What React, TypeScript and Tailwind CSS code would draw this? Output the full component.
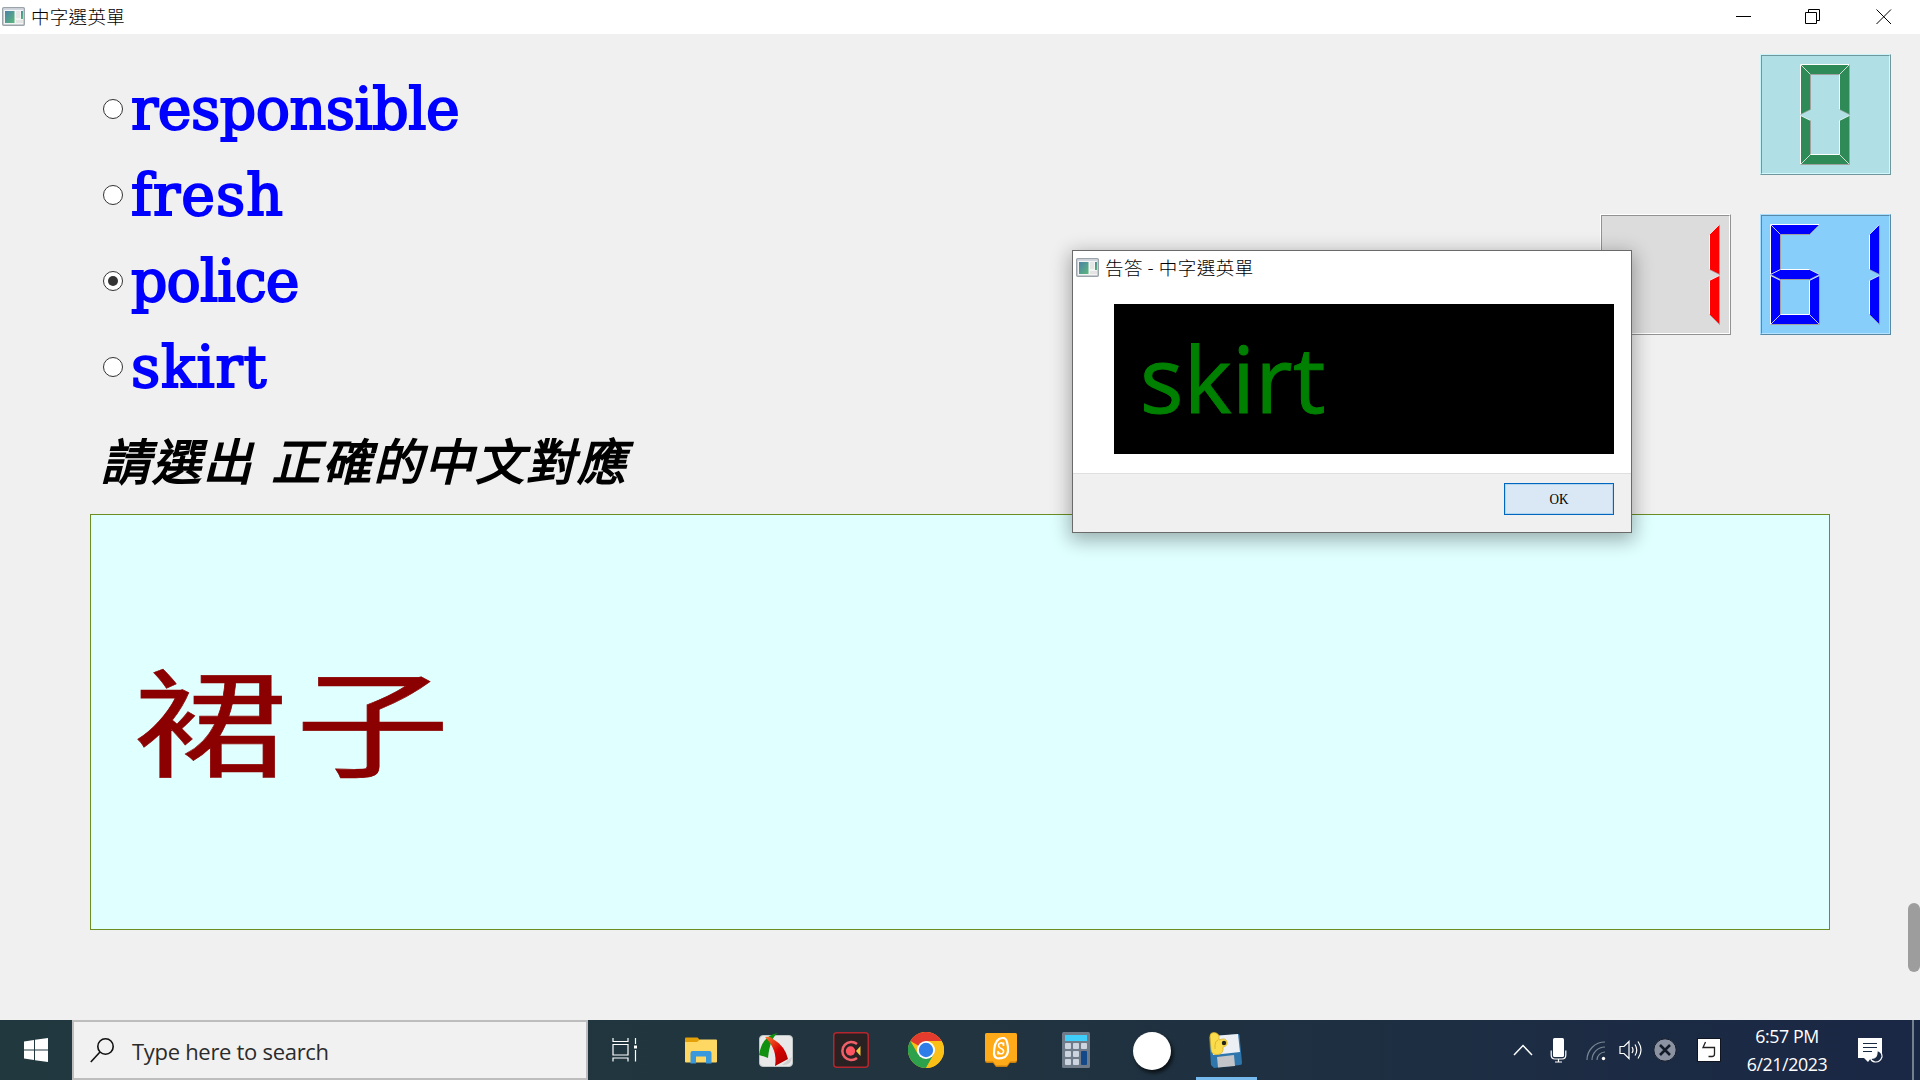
import React from "react";

type Point = [number, number];

const SEGMENTS: Record<string, Point[]> = {
  top: [[0, 0], [49, 0], [39, 10], [10, 10]],
  upperLeft: [[0, 0], [10, 10], [10, 45], [0, 50]],
  upperRight: [[49, 0], [49, 50], [39, 45], [39, 10]],
  middle: [[0, 50], [10, 45], [39, 45], [49, 50], [39, 55], [10, 55]],
  lowerLeft: [[0, 51], [10, 56], [10, 90], [0, 100]],
  lowerRight: [[49, 51], [49, 100], [39, 90], [39, 56]],
  bottom: [[0, 100], [10, 90], [39, 90], [49, 100]],
};

const DIGITS: Record<string, string[]> = {
  "0": ["top", "upperLeft", "upperRight", "lowerLeft", "lowerRight", "bottom"],
  "1": ["upperRight", "lowerRight"],
  "6": ["top", "upperLeft", "middle", "lowerLeft", "lowerRight", "bottom"],
};

function signedArea(points: Point[]) {
  return points.reduce((sum, a, i) => {
    const b = points[(i + 1) % points.length];
    return sum + a[0] * b[1] - b[0] * a[1];
  }, 0);
}

function Segment({ points, fill }: { points: Point[]; fill: string }) {
  const ordered = signedArea(points) > 0 ? points : [...points].reverse();
  return (
    <g>
      <polygon points={ordered.map((p) => p.join(",")).join(" ")} fill={fill} />
      {ordered.map((a, i) => {
        const b = ordered[(i + 1) % ordered.length];
        const dx = b[0] - a[0];
        const dy = b[1] - a[1];
        const lit = dx > 0 || (dx === 0 && dy < 0);
        const slanted = dx !== 0 && dy !== 0;
        return (
          <line
            key={i}
            x1={a[0]}
            y1={a[1]}
            x2={b[0]}
            y2={b[1]}
            stroke={lit ? "#ffffff" : "#a0a0a0"}
            strokeWidth={1}
            strokeOpacity={slanted ? 0.7 : 1}
          />
        );
      })}
    </g>
  );
}

function Lcd({ digits, color, outer, inner }: { digits: { value: string; x: number }[]; color: string; outer: string; inner: string }) {
  return (
    <div className={`h-[121px] w-[131px] shrink-0 border ${outer}`}>
      <div className={`h-full w-full border ${inner}`}>
        <svg viewBox="2 2 127 117" className="block h-[117px] w-[127px]">
          {digits.map((d) => (
            <g key={d.x} transform={`translate(${d.x + 0.5} 10.5)`}>
              {DIGITS[d.value].map((s) => (
                <Segment key={s} points={SEGMENTS[s]} fill={color} />
              ))}
            </g>
          ))}
        </svg>
      </div>
    </div>
  );
}

function WindowIcon() {
  return (
    <svg width="23" height="19" viewBox="0 0 23 19">
      <defs>
        <linearGradient id="pane" x1="0" y1="0" x2="1" y2="1">
          <stop offset="0" stopColor="#4a82a8" />
          <stop offset="1" stopColor="#5cb87a" />
        </linearGradient>
      </defs>
      <rect x="0.75" y="0.75" width="21.5" height="17.5" rx="1" fill="#f4f4f4" stroke="#9ba3ab" strokeWidth="1.5" />
      <rect x="1.5" y="1.5" width="20" height="1.5" fill="#cfd6e0" />
      <rect x="3" y="4" width="9.5" height="12" fill="url(#pane)" />
      <rect x="14" y="4" width="4" height="7" fill="#e6e6e6" />
      <rect x="19" y="4" width="2" height="8" fill="url(#pane)" />
      <rect x="14" y="13" width="7" height="3" fill="#e4e4e4" />
    </svg>
  );
}

const OPTIONS = [
  { word: "responsible", tracking: "tracking-[-0.5px]", checked: false },
  { word: "fresh", tracking: "tracking-[1px]", checked: false },
  { word: "police", tracking: "tracking-[-0.9px]", checked: true },
  { word: "skirt", tracking: "tracking-[0.8px]", checked: false },
];

function TitleBar() {
  return (
    <header className="flex h-[34px] items-center bg-white">
      <div className="ml-[2px] mt-[-1px]"><WindowIcon /></div>
      <div className="ml-[6px] pb-[2px] text-[18.5px] font-light leading-[32px] tracking-[0.3px] text-black">中字選英單</div>
      <svg className="ml-auto mr-7" width="156" height="16" viewBox="0 0 156 16" fill="none" stroke="#000" strokeWidth="1">
        <path d="M0 7.5H15" />
        <path d="M69.500 3.500H80.500V14.500H69.500ZM72.500 3.500V0.500H83.500V11.500H80.500" />
        <path d="M140.500 0.500L155 15M155 0.500L140.500 15" />
      </svg>
    </header>
  );
}

function Dialog() {
  return (
    <div className="absolute left-[1072px] top-[250px] flex h-[283px] w-[560px] flex-col border border-[#6a6a6a] bg-white shadow-[0_5px_18px_2px_rgba(0,0,0,0.32)]">
      <div className="flex h-[34px] items-center pl-[3px]">
        <div className="mt-[-1px]"><WindowIcon /></div>
        <span className="ml-[6px] text-[18.5px] font-light tracking-[0.5px] text-black">告答 - 中字選英單</span>
      </div>
      <div className="ml-[41px] mt-[19px] flex h-[150px] w-[500px] items-center bg-black pb-[2px] pl-[26px]">
        <span className="font-['Open_Sans','Noto_Sans',sans-serif] text-[91px] leading-[148px] tracking-[0.4px] text-[#008000] [-webkit-text-stroke:1px_#008000]">skirt</span>
      </div>
      <div className="mt-[19px] flex flex-1 items-start justify-end border-t border-[#dfdfdf] bg-[#f0f0f0] pr-[17px] pt-[9px]">
        <button className="flex h-[32px] w-[110px] items-center justify-center border border-[#0067c0] bg-[#dae8f5] font-['Liberation_Serif',serif] text-[14px] text-black shadow-[inset_0_0_0_1px_#b5d4ee]">
          <span className="scale-x-[0.94]">OK</span>
        </button>
      </div>
    </div>
  );
}

function Cell({ children, width = "w-[75px]" }: { children: React.ReactNode; width?: string }) {
  return <div className={`flex h-full shrink-0 items-center justify-center ${width}`}>{children}</div>;
}

function Apps() {
  return (
    <>
      <Cell>
        <svg width="26" height="24" viewBox="0 0 26 24" fill="none" stroke="#fff" strokeWidth="1.2" className="mr-[2px]">
          <path d="M1 0V3.500H16V0M1 6.500H16V17H1ZM1 23.500V20H16V23.500M23.500 0V6M23.500 12V23.500" />
          <rect x="22" y="7.500" width="3" height="3" fill="#fff" stroke="none" />
        </svg>
      </Cell>
      <Cell>
        <svg width="32" height="27" viewBox="0 0 32 27">
          <path d="M0 1.500Q0 0.500 1 0.500H12.500L15 3V6H0Z" fill="#e3a008" />
          <path d="M0 5H12L15 2.500H31Q32 2.500 32 3.500V24.500Q32 25.500 31 25.500H1Q0 25.500 0 24.500Z" fill="#ffd763" />
          <path d="M5.500 26.500V16Q5.500 14 7.500 14H24.500Q26.500 14 26.500 16V26.500H21V19.500H11V26.500Z" fill="#3a98dc" />
        </svg>
      </Cell>
      <Cell>
        <svg width="36" height="36" viewBox="0 0 36 36">
          <defs>
            <linearGradient id="blade" x1="0" y1="0" x2="0.7" y2="1"><stop stopColor="#ff7a30" /><stop offset="0.6" stopColor="#d40000" /><stop offset="1" stopColor="#b00000" /></linearGradient>
          </defs>
          <rect x="1.5" y="3.5" width="33" height="31" rx="3.5" fill="#e8e8e8" stroke="#bcc4c6" />
          <path d="M1 23Q3 11 9 6Q13 2 20 1Q12 6 10 26Q5 24 1 23Z" fill="#12900f" />
          <path d="M7 5Q12 4 15 7Q27 14 30 27L17 34Q20 18 7 5Z" fill="url(#blade)" />
          <path d="M30 28L34 25Q33 34 24 33Z" fill="#cfcfcf" />
        </svg>
      </Cell>
      <Cell>
        <svg width="36" height="36" viewBox="0 0 36 36">
          <rect x="0.75" y="0.75" width="34.5" height="34.5" rx="3" fill="#2a2123" stroke="#b3262e" strokeWidth="1.5" />
          <path d="M24 12A9 9 0 1 0 24 26" fill="none" stroke="#f0616a" strokeWidth="2.5" />
          <circle cx="17.5" cy="19" r="4.7" fill="#fa5560" />
          <path d="M23 19L27.500 14V24Z" fill="#f5c842" />
        </svg>
      </Cell>
      <Cell>
        <svg width="36" height="36" viewBox="0 0 36 36">
          <circle cx="18" cy="18" r="18" fill="#fbc016" />
          <path d="M18 18L2.400 9A18 18 0 0 1 33.600 9Z" fill="#e33b2e" />
          <path d="M2.400 9A18 18 0 0 0 18 36L25.800 22.500L18 18L10.200 22.500Z" fill="#2da14c" />
          <path d="M18 9H33.600A18 18 0 0 1 18 36L25.800 22.500Z" fill="#fbc016" />
          <circle cx="18" cy="18" r="9" fill="#fff" />
          <circle cx="18" cy="18" r="7.2" fill="#2f7de9" />
        </svg>
      </Cell>
      <Cell>
        <svg width="32" height="36" viewBox="0 0 32 36">
          <path d="M2 1H30Q32 1 32 3V29Q32 31 30 31H25L22 35H11L8 31H2Q0 31 0 29V3Q0 1 2 1Z" fill="#c97f10" />
          <path d="M2 1H30Q32 1 32 3V27.500Q32 29.500 30 29.500H25L22 33.500H11L8 29.500H2Q0 29.500 0 27.500V3Q0 1 2 1Z" fill="#ffab19" />
          <path d="M14 7Q21 4 22 10Q25 21 20 25Q10 29 9 22Q9 10 14 7Z" fill="#ffab19" stroke="#fff" strokeWidth="2.2" />
          <path d="M18.500 13Q18 10.500 15.500 11Q12.500 12 14 15Q15 16 17 17Q20 19 17.500 21.500Q14.500 22.500 13 20M18.500 10.500V14M13 19V22.500" fill="none" stroke="#fff" strokeWidth="1.6" />
        </svg>
      </Cell>
      <Cell>
        <svg width="28" height="36" viewBox="0 0 28 36">
          <rect width="28" height="36" rx="1.5" fill="#6f7b88" />
          <rect x="3" y="3" width="22" height="6" fill="#3fcdfa" />
          {[[3, 11], [11, 11], [19, 11], [3, 19], [11, 19], [3, 27], [11, 27]].map(([x, y]) => (
            <rect key={`${x}-${y}`} x={x} y={y} width="6" height="6" rx="1" fill="#ccd5df" />
          ))}
          <rect x="19" y="19" width="6" height="14" rx="1" fill="#134889" />
        </svg>
      </Cell>
      <Cell>
        <div className="ml-[3px] mt-[2px] h-[38px] w-[38px] rounded-full bg-white shadow-[2px_3px_4px_rgba(0,0,0,0.7)]" />
      </Cell>
      <div className="relative flex h-full w-[75px] items-center justify-center">
        <svg width="35" height="36" viewBox="0 0 35 36">
          <path d="M1 5L30 2Q31 2 31.500 3L34 31Q34 33 32 33L6 36L3 33Z" fill="#2f76ad" />
          <path d="M4 4L30 2L32 20L5 23Z" fill="#eceff4" />
          <path d="M9 25L26 23L27 34L10 35.500Z" fill="#c3c5c8" />
          <path d="M2 4Q2 0.500 6 0.500Q11 1 11 5V8Q18 5 19 10Q20 14 15 15V18Q14 23 8 22.500Q3 22 3 17Z" fill="#fbdc4c" stroke="#d7ae25" strokeWidth="0.7" />
          <path d="M10 8Q7 9 7 13V17" fill="none" stroke="#d7ae25" strokeWidth="0.8" />
          <circle cx="16" cy="11" r="2.2" fill="#222" />
        </svg>
        <div className="absolute bottom-0 left-[8px] h-[3px] w-[61px] bg-[#76b9ed]" />
      </div>
    </>
  );
}

function Tray() {
  return (
    <div className="ml-auto flex h-full w-[415px] items-center">
      <Cell width="w-[36px]">
        <svg width="20" height="12" viewBox="0 0 20 12" fill="none" stroke="#fff" strokeWidth="1.5"><path d="M1 11L10 1.500L19 11" /></svg>
      </Cell>
      <Cell width="w-[35px]">
        <svg width="17" height="25" viewBox="0 0 17 25">
          <rect x="3" y="0" width="11" height="19" rx="1.5" fill="#fff" />
          <path d="M1.200 12.500V17Q1.200 21 5 21H12Q15.800 21 15.800 17V12.500M8.500 21V24M5 24H12" fill="none" stroke="#fff" strokeWidth="1.2" />
        </svg>
      </Cell>
      <Cell width="w-[37px]">
        <svg width="20" height="20" viewBox="0 0 20 20" className="ml-[2px] mt-[2px]" fill="none" stroke="#7b8794" strokeWidth="1.2">
          <path d="M1 19A18 18 0 0 1 19 1M6 19A13 13 0 0 1 19 6M11 19A8 8 0 0 1 19 11" />
          <circle cx="17.5" cy="17.5" r="1.7" fill="#fff" stroke="none" />
        </svg>
      </Cell>
      <Cell width="w-[35px]">
        <svg width="24" height="20" viewBox="0 0 24 20" fill="none" stroke="#fff" strokeWidth="1.2">
          <path d="M1 6.500H5L10 1.500V18.500L5 13.500H1ZM13 7Q15 10 13 13M16 4.500Q19.500 10 16 15.500M19 1.500Q25 10 19 18.500" />
        </svg>
      </Cell>
      <Cell width="w-[34px]">
        <svg width="24" height="24" viewBox="0 0 24 24">
          <circle cx="12" cy="12" r="11.2" fill="#8b93a3" stroke="#141b28" strokeWidth="1" />
          <path d="M7 7L17 17M17 7L7 17" stroke="#141b28" strokeWidth="2.6" />
        </svg>
      </Cell>
      <Cell width="w-[54px]">
        <svg width="24" height="24" viewBox="0 0 24 24">
          <rect x="0.5" y="0.5" width="23" height="23" fill="#fff" stroke="#10151f" />
          <path d="M8.500 4L6 9.500H17.500V16Q17.500 18.500 15 18.500H11.500" fill="none" stroke="#222" strokeWidth="1.3" />
        </svg>
      </Cell>
      <div className="w-[102px] pb-px text-center font-['Open_Sans','Noto_Sans',sans-serif] text-[17.8px] leading-[28px] tracking-[-0.4px] text-white">
        <div>6:57 PM</div>
        <div>6/21/2023</div>
      </div>
      <Cell width="w-[64px]">
        <svg width="25" height="25" viewBox="0 0 25 25">
          <path d="M0 0H24V20H13L10 24L6 20H0Z" fill="#fff" />
          <path d="M5 5.500H19M5 9.500H19M5 13.500H14" stroke="#1b2a44" strokeWidth="1.2" />
          <path d="M19 12.500Q24.500 14 24 19Q22 24.500 17 24Q13.500 23.500 12.500 20.500Q20 21 19 12.500Z" fill="#1b2a44" stroke="#fff" strokeWidth="1.1" />
        </svg>
      </Cell>
      <div className="ml-[10px] h-full w-[2px] bg-[#75808f]" />
    </div>
  );
}

export default function App() {
  return (
    <div className="relative flex h-[1080px] w-[1920px] flex-col overflow-hidden bg-[#f0f0f0] font-['Noto_Sans_CJK_TC',sans-serif]">
      <TitleBar />
      <main className="flex h-[986px] flex-col">
        <section className="flex h-[480px] justify-between pl-[103px] pr-[29px]">
          <div className="pt-8">
            {OPTIONS.map((o) => (
              <label key={o.word} className="flex h-[86px] items-center">
                <span className="flex h-5 w-5 items-center justify-center rounded-full border border-[#333] bg-white">
                  {o.checked && <span className="h-[10px] w-[10px] rounded-full bg-[#333]" />}
                </span>
                <span className={`ml-[8px] font-['DejaVu_Serif',serif] text-[57px] leading-[86px] text-[#0000ff] [-webkit-text-stroke:2px_#0000ff] ${o.tracking}`}>
                  {o.word}
                </span>
              </label>
            ))}
            <h1 className="ml-[-2px] whitespace-nowrap text-[49px] font-normal italic leading-[97px] tracking-[1.9px] text-black [-webkit-text-stroke:1.6px_#000] [word-spacing:5px]">請選出 正確的中文對應</h1>
          </div>
          <div className="flex flex-col items-end gap-[39px] pt-5">
            <Lcd digits={[{ value: "0", x: 40 }]} color="#2e8b57" outer="border-t-[#c9f5fa] border-l-[#c9f5fa] border-b-[#70979c] border-r-[#70979c]" inner="bg-[#b0e0e6] border-t-[#70979c] border-l-[#70979c] border-b-[#d2f8fd] border-r-[#d2f8fd]" />
            <div className="flex gap-[29px]">
              <Lcd digits={[{ value: "1", x: 70 }]} color="#ff0000" outer="border-t-white border-l-white border-b-[#929292] border-r-[#929292]" inner="bg-[#dcdcdc] border-t-[#929292] border-l-[#929292] border-b-white border-r-white" />
              <Lcd digits={[{ value: "6", x: 10 }, { value: "1", x: 70 }]} color="#0000ff" outer="border-t-[#a8deff] border-l-[#a8deff] border-b-[#5a89a6] border-r-[#5a89a6]" inner="bg-[#87cefa] border-t-[#5a89a6] border-l-[#5a89a6] border-b-[#b4e2ff] border-r-[#b4e2ff]" />
            </div>
          </div>
        </section>
        <section className="ml-[90px] flex h-[416px] w-[1740px] items-center border border-[#6b8e23] bg-[#e0ffff] pb-[9px] pl-[42px]">
          <span className="origin-left scale-x-[1.32] text-[117px] leading-none tracking-[6px] text-[#8b0000] [-webkit-text-stroke:0.6px_#8b0000]">裙子</span>
        </section>
      </main>
      <footer className="flex h-[60px] items-center bg-linear-to-r from-[#21383f] via-[#21343f] to-[#1a2745]">
        <Cell width="w-[72px]">
          <svg width="24" height="24" viewBox="0 0 24 24" fill="#fff">
            <path d="M0 3.500L10 2V11.500H0ZM11 1.800L24 0V11.500H11ZM0 12.500H10V22L0 20.500ZM11 12.500H24V24L11 22.200Z" />
          </svg>
        </Cell>
        <div className="flex h-full w-[516px] items-center border-2 border-[#bdbdbd] bg-[#f1f1f1] pl-4">
          <svg width="25" height="25" viewBox="0 0 25 25" fill="none" stroke="#111" strokeWidth="1.6">
            <circle cx="15.5" cy="8.5" r="7.7" />
            <path d="M10 14L0.800 24" />
          </svg>
          <span className="ml-[17px] pt-[3px] font-['Open_Sans','Noto_Sans',sans-serif] text-[22px] tracking-[-0.3px] text-[#2b2b2b]">Type here to search</span>
        </div>
        <Apps />
        <Tray />
      </footer>
      <div className="absolute left-[1908px] top-[903px] h-[69px] w-3 rounded-full bg-[#9d9d9d]" />
      <Dialog />
    </div>
  );
}
